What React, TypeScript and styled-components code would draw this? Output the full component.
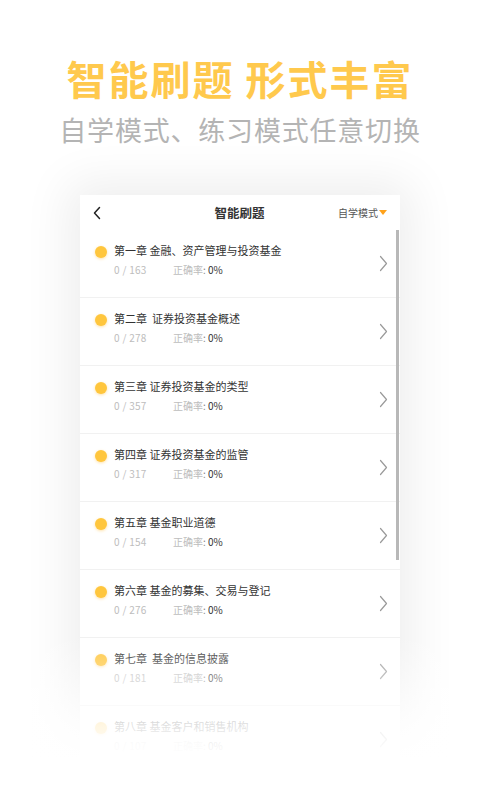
import React from 'react'
import styled, { createGlobalStyle } from 'styled-components'

const GlobalStyle = createGlobalStyle`
  html, body {
    margin: 0;
    padding: 0;
    background: #fff;
    font-family: "Noto Sans CJK SC", "Noto Sans", sans-serif;
  }
`

const chapters = [
  { title: '第一章 金融、资产管理与投资基金', total: 163 },
  { title: '第二章  证券投资基金概述', total: 278 },
  { title: '第三章 证券投资基金的类型', total: 357 },
  { title: '第四章 证券投资基金的监管', total: 317 },
  { title: '第五章 基金职业道德', total: 154 },
  { title: '第六章 基金的募集、交易与登记', total: 276 },
  { title: '第七章  基金的信息披露', total: 181 },
  { title: '第八章 基金客户和销售机构', total: 107 },
]

const Page = styled.div`
  position: relative;
  width: 480px;
  height: 800px;
  overflow: hidden;
  display: flex;
  flex-direction: column;
  align-items: center;
  background: #fff;
`

const Headline = styled.h1`
  margin: 55px 0 0;
  font-size: 40px;
  line-height: 46px;
  font-weight: 700;
  letter-spacing: 2px;
  color: #ffc94d;
  white-space: pre;
`

const Subline = styled.p`
  margin: 13px 0 0;
  font-size: 27px;
  line-height: 32px;
  font-weight: 400;
  letter-spacing: 0.8px;
  color: #b4b4b4;
`

const Phone = styled.div`
  position: relative;
  margin-top: 49px;
  width: 320px;
  height: 600px;
  background: #fff;
  box-shadow: 0 0 45px 12px rgba(0, 0, 0, 0.07);
  display: flex;
  flex-direction: column;
`

const NavBar = styled.div`
  height: 35px;
  display: grid;
  grid-template-columns: 70px 1fr 70px;
  align-items: center;
  padding: 0 13px 0 12px;
  box-sizing: border-box;
`

const NavTitle = styled.div`
  text-align: center;
  font-size: 12.5px;
  font-weight: 700;
  color: #333;
`

const ModeSwitch = styled.div`
  display: flex;
  align-items: center;
  justify-content: flex-end;
  gap: 1px;
  font-size: 10px;
  color: #555;
`

const Caret = styled.span`
  width: 0;
  height: 0;
  border-left: 4px solid transparent;
  border-right: 4px solid transparent;
  border-top: 5px solid #ffa21a;
`

const List = styled.div`
  display: flex;
  flex-direction: column;
`

const Row = styled.div`
  height: 68px;
  box-sizing: border-box;
  border-bottom: 1px solid #f1f1f1;
  display: flex;
  align-items: center;
  padding: 0 12px 0 15px;
`

const Dot = styled.span`
  flex: none;
  align-self: flex-start;
  margin-top: 16px;
  width: 12px;
  height: 12px;
  border-radius: 50%;
  background: #ffc63d;
  box-shadow: 0 1px 3px rgba(255, 190, 60, 0.45);
`

const RowBody = styled.div`
  flex: 1;
  margin-left: 7px;
  align-self: flex-start;
  padding-top: 12px;
`

const RowTitle = styled.div`
  font-size: 11px;
  line-height: 16px;
  color: #333;
  white-space: pre;
`

const Stats = styled.div`
  margin-top: 5px;
  display: flex;
  font-size: 10px;
  line-height: 14px;
  color: #bdbdbd;
`

const Count = styled.span`
  width: 59px;
  letter-spacing: 0.3px;
`

const Colon = styled.span`
  color: #888;
`

const Rate = styled.span`
  color: #333;
`

const Scrollbar = styled.div`
  position: absolute;
  right: 1px;
  top: 35px;
  width: 3px;
  height: 330px;
  background: #b8b8b8;
`

const Fade = styled.div`
  position: absolute;
  left: 0;
  right: 0;
  top: 635px;
  bottom: 0;
  background: linear-gradient(
    to bottom,
    rgba(255, 255, 255, 0) 0%,
    rgba(255, 255, 255, 0.85) 55%,
    #fff 75%
  );
`

const BackIcon = () => (
  <svg width="10" height="14" viewBox="0 0 10 14">
    <path d="M7.5 1.5 2.5 7l5 5.5" fill="none" stroke="#222" strokeWidth="1.5" strokeLinecap="round" strokeLinejoin="round" />
  </svg>
)

const Chevron = () => (
  <svg width="9" height="17" viewBox="0 0 9 17">
    <path d="M1.5 1.5 7.5 8.5l-6 7" fill="none" stroke="#9a9a9a" strokeWidth="1.2" strokeLinecap="round" strokeLinejoin="round" />
  </svg>
)

const App: React.FC = () => (
  <Page>
    <GlobalStyle />
    <Headline>{'智能刷题 形式丰富'}</Headline>
    <Subline>自学模式、练习模式任意切换</Subline>
    <Phone>
      <NavBar>
        <BackIcon />
        <NavTitle>智能刷题</NavTitle>
        <ModeSwitch>
          自学模式
          <Caret />
        </ModeSwitch>
      </NavBar>
      <List>
        {chapters.map((c) => (
          <Row key={c.title}>
            <Dot />
            <RowBody>
              <RowTitle>{c.title}</RowTitle>
              <Stats>
                <Count>0 / {c.total}</Count>
                <span>正确率</span>
                <Colon>:</Colon>
                <Rate>&nbsp;0%</Rate>
              </Stats>
            </RowBody>
            <Chevron />
          </Row>
        ))}
      </List>
      <Scrollbar />
    </Phone>
    <Fade />
  </Page>
)

export default App
